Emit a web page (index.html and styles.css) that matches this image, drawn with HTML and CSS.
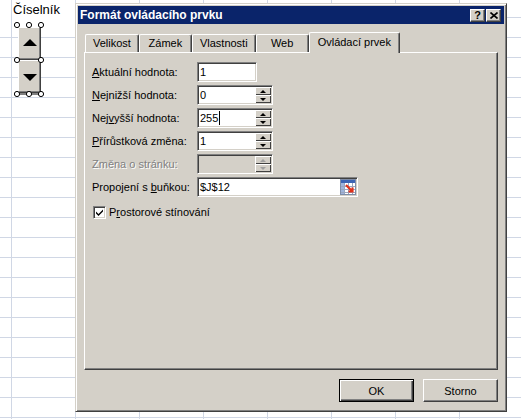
FILE: index.html
```html
<!DOCTYPE html>
<html lang="cs">
<head>
<meta charset="utf-8">
<title>Formát ovládacího prvku</title>
<link rel="stylesheet" href="styles.css">
</head>
<body>
<div class="sheet">
  <div class="cell-cover"></div>
  <div class="cell-label">Číselník</div>
  <svg class="spinctl" width="40" height="82" viewBox="10 18 40 82">
    <rect x="18" y="27" width="23" height="33" fill="#d4d0c8"/>
    <rect x="18" y="60" width="23" height="33" fill="#d4d0c8"/>
    <path d="M18.5 59V27.5H40" stroke="#fff" fill="none"/>
    <path d="M18.5 92V60.5H40" stroke="#fff" fill="none"/>
    <path d="M40.5 27v33M18 59.5h23" stroke="#404040" fill="none"/>
    <path d="M40.5 60v33M18 92.5h23" stroke="#404040" fill="none"/>
    <path d="M39.5 28v31M19 58.5h21M39.5 61v31M19 91.5h21" stroke="#808080" fill="none"/>
    <path d="M23 46h14l-7-7z" fill="#000"/>
    <path d="M23 74h14l-7 7z" fill="#000"/>
    <path d="M17 94h24" stroke="#000" fill="none"/>
    <g fill="#fff" stroke="#000">
      <circle cx="17" cy="25" r="2.6"/><circle cx="29" cy="25" r="2.6"/><circle cx="41" cy="25" r="2.6"/>
      <circle cx="17" cy="60" r="2.6"/><circle cx="41" cy="60" r="2.6"/>
      <circle cx="17" cy="94" r="2.6"/><circle cx="29" cy="94" r="2.6"/><circle cx="41" cy="94" r="2.6"/>
    </g>
  </svg>

  <div class="dialog">
    <div class="titlebar">
      <span class="title">Formát ovládacího prvku</span>
      <div class="caption-btns">
        <span class="cbtn help">?</span>
        <span class="cbtn close"><svg width="8" height="7" viewBox="0 0 8 7"><path d="M0.5 0.5l7 6M7.5 0.5l-7 6" stroke="#000" stroke-width="1.6" fill="none"/></svg></span>
      </div>
    </div>
    <div class="dlg-body">
      <div class="tabs">
        <div class="tab">Velikost</div>
        <div class="tab">Zámek</div>
        <div class="tab">Vlastnosti</div>
        <div class="tab">Web</div>
        <div class="tab active">Ovládací prvek</div>
      </div>
      <div class="panel">
        <div class="form">
          <span class="lbl"><u>A</u>ktuální hodnota:</span>
          <div class="field w-short"><span class="val">1</span></div>

          <span class="lbl"><u>N</u>ejnižší hodnota:</span>
          <div class="field w-spin"><span class="val">0</span><span class="spin"><span class="up"></span><span class="down"></span></span></div>

          <span class="lbl">Nej<u>v</u>yšší hodnota:</span>
          <div class="field w-spin"><span class="val">255</span><span class="caret"></span><span class="spin"><span class="up"></span><span class="down"></span></span></div>

          <span class="lbl"><u>P</u>řírůstková změna:</span>
          <div class="field w-spin"><span class="val">1</span><span class="spin"><span class="up"></span><span class="down"></span></span></div>

          <span class="lbl disabled">Změna o stránku:</span>
          <div class="field w-spin off"><span class="val"></span><span class="spin off"><span class="up"></span><span class="down"></span></span></div>

          <span class="lbl">Propojení s <u>b</u>uňkou:</span>
          <div class="field w-link"><span class="val">$J$12</span>
            <svg class="refedit" width="16" height="16" viewBox="0 0 16 16">
              <rect x="0.5" y="0.5" width="15" height="15" fill="#fff" stroke="#7f8da8"/>
              <rect x="1" y="1" width="14" height="3" fill="#3c64b4"/>
              <rect x="1" y="4" width="3" height="11" fill="#9fb4dc"/>
              <path d="M1 7.5h14M1 10.5h14M1 13.5h14M4.5 4v11M8.5 4v11M12.5 4v11" stroke="#9aa6bf" fill="none"/>
              <path d="M6 6l6 6M8.5 12.5h4v-4" stroke="#e03018" stroke-width="2.2" fill="none"/>
            </svg>
          </div>
        </div>
        <label class="check">
          <span class="box"><svg width="7" height="7" viewBox="0 0 7 7"><path d="M0 2.5l2.5 2.5L7 0.5v2L2.5 7L0 4.5z" fill="#000"/></svg></span>
          <span>P<u>r</u>ostorové stínování</span>
        </label>
      </div>
      <div class="actions">
        <button class="btn default">OK</button>
        <button class="btn">Storno</button>
      </div>
    </div>
  </div>
</div>
</body>
</html>
```
FILE: styles.css
```css
body {
  margin: 0;
  font-family: "Liberation Sans", Arial, sans-serif;
  font-size: 11px;
  color: #000;
}

.sheet {
  position: relative;
  width: 521px;
  height: 419px;
  overflow: hidden;
  background-color: #fff;
  background-image:
    linear-gradient(to right, #d0d7e5 1px, transparent 1px),
    linear-gradient(to bottom, #d0d7e5 1px, transparent 1px);
  background-size: 64px 100%, 100% 20px;
  background-position: 11px 0, 0 17px;
}

.cell-cover {
  position: absolute;
  left: 0;
  top: 0;
  width: 75px;
  height: 37px;
  background: linear-gradient(to right, transparent 11px, #d0d7e5 11px, #d0d7e5 12px, transparent 12px), #fff;
}

.cell-label {
  position: absolute;
  left: 13px;
  top: 2px;
  font-size: 13px;
  line-height: 15px;
}

.spinctl {
  position: absolute;
  left: 10px;
  top: 18px;
}

.dialog {
  position: absolute;
  left: 75px;
  top: 3px;
  width: 432px;
  height: 409px;
  box-sizing: border-box;
  background: #d4d0c8;
  border: 1px solid;
  border-color: #d4d0c8 #404040 #404040 #d4d0c8;
  box-shadow: inset 1px 1px #fff, inset -1px -1px #808080;
  padding: 2px;
  display: flex;
  flex-direction: column;
}

.titlebar {
  height: 18px;
  flex: none;
  background: #0a246a;
  color: #fff;
  display: flex;
  align-items: center;
  justify-content: space-between;
  padding: 0 3px 0 2px;
}

.title {
  font-weight: bold;
  font-size: 12px;
  line-height: 14px;
}

.caption-btns {
  display: flex;
  gap: 1px;
}

.cbtn {
  width: 15px;
  height: 13px;
  box-sizing: border-box;
  background: #d4d0c8;
  border: 1px solid;
  border-color: #fff #404040 #404040 #fff;
  box-shadow: inset -1px -1px #808080;
  color: #000;
  display: flex;
  align-items: center;
  justify-content: center;
  font-weight: bold;
  font-size: 11px;
  line-height: 11px;
}

.dlg-body {
  flex: 1;
  display: flex;
  flex-direction: column;
  padding: 8px 6px 0 6px;
}

.tabs {
  height: 20px;
  display: flex;
  align-items: flex-end;
  padding-left: 1px;
}

.tab {
  height: 18px;
  min-width: 53px;
  box-sizing: border-box;
  padding: 0 7px;
  border-left: 1px solid #fff;
  border-top: 1px solid #fff;
  border-right: 1px solid #404040;
  border-radius: 2px 2px 0 0;
  box-shadow: inset -1px 0 #808080;
  display: flex;
  align-items: center;
  justify-content: center;
  white-space: nowrap;
  line-height: 13px;
}

.tab.active {
  height: 21px;
  margin: 0 -2px -1px 0;
  padding: 0 8px 1px;
  position: relative;
  z-index: 1;
  background: #d4d0c8;
}

.panel {
  height: 318px;
  box-sizing: border-box;
  border: 1px solid;
  border-color: #fff #404040 #404040 #fff;
  box-shadow: inset -1px -1px #808080;
  padding: 9px 7px;
}

.form {
  display: grid;
  grid-template-columns: 105px auto;
  row-gap: 3px;
  align-items: center;
  justify-items: start;
}

.lbl {
  line-height: 13px;
  white-space: nowrap;
}

.lbl.disabled {
  color: #808080;
  text-shadow: 1px 1px 0 #fff;
}

.field {
  height: 20px;
  box-sizing: border-box;
  border: 1px solid;
  border-color: #808080 #fff #fff #808080;
  box-shadow: inset 1px 1px #404040, inset -1px -1px #d4d0c8;
  background: #fff;
  display: flex;
  align-items: center;
  padding: 0 1px 0 2px;
}

.field.off {
  background: #d4d0c8;
}

.w-short { width: 60px; }
.w-spin { width: 76px; }
.w-link { width: 161px; }

.val {
  line-height: 13px;
}

.caret {
  width: 1px;
  height: 14px;
  background: #000;
  margin-left: 1px;
}

.spin {
  margin-left: auto;
  width: 16px;
  height: 16px;
  display: flex;
  flex-direction: column;
}

.spin span {
  flex: 1;
  background: #d4d0c8;
  box-shadow: inset 1px 1px #fff, inset -1px -1px #404040;
  display: flex;
  align-items: center;
  justify-content: center;
}

.spin span::after {
  content: "";
  width: 0;
  height: 0;
  border-left: 3px solid transparent;
  border-right: 3px solid transparent;
}

.spin .up::after {
  border-bottom: 3px solid #000;
}

.spin .down::after {
  border-top: 3px solid #000;
}

.spin.off .up::after {
  border-bottom-color: #a0a0a0;
}

.spin.off .down::after {
  border-top-color: #a0a0a0;
}

.refedit {
  margin-left: auto;
}

.check {
  margin-top: 9px;
  margin-left: 1px;
  display: flex;
  align-items: center;
  gap: 3px;
  line-height: 13px;
}

.box {
  width: 13px;
  height: 13px;
  box-sizing: border-box;
  border: 1px solid;
  border-color: #808080 #fff #fff #808080;
  box-shadow: inset 1px 1px #404040, inset -1px -1px #d4d0c8;
  background: #fff;
  display: flex;
  align-items: center;
  justify-content: center;
}

.actions {
  margin-top: 9px;
  display: flex;
  justify-content: flex-end;
  gap: 9px;
}

.btn {
  width: 75px;
  height: 23px;
  box-sizing: border-box;
  font-family: "Liberation Sans", Arial, sans-serif;
  font-size: 11px;
  color: #000;
  background: #d4d0c8;
  border: 1px solid;
  border-color: #fff #404040 #404040 #fff;
  box-shadow: inset -1px -1px #808080;
  padding: 0;
}

.btn.default {
  border: 1px solid #000;
  box-shadow: inset 1px 1px #fff, inset -1px -1px #404040, inset -2px -2px #808080;
}
```
